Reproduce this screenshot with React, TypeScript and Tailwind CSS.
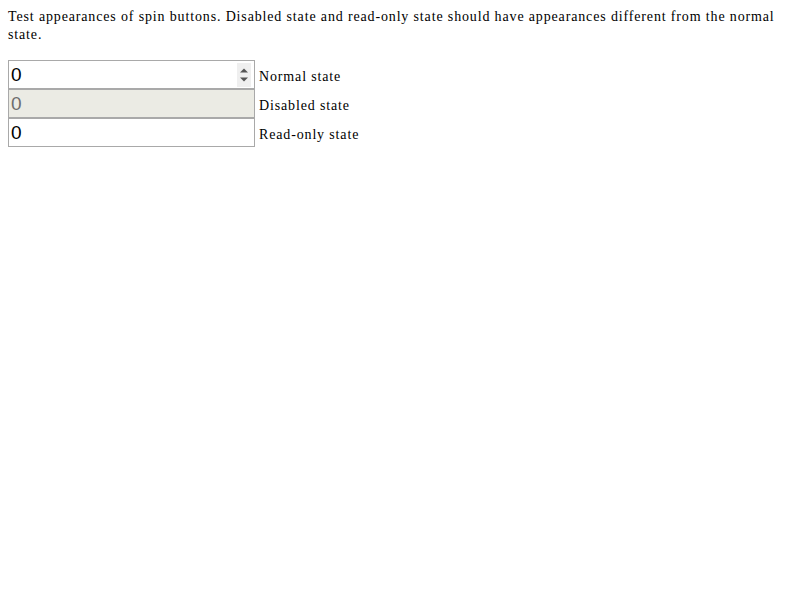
import { useState } from 'react'

const SpinIcon = () => (
  <svg width="14" height="24" viewBox="0 0 14 24">
    <rect x="0" y="0" width="14" height="24" fill="#efefef" />
    <path d="M3 9.5L7 5.5 11 9.5Z" fill="#555" />
    <path d="M3 14.5L7 18.5 11 14.5Z" fill="#555" />
  </svg>
)

function Field({ state }: { state: 'normal' | 'disabled' | 'readonly' }) {
  const [value, setValue] = useState('0')
  const disabled = state === 'disabled'
  return (
    <div
      className={`flex items-center w-[247px] h-[29px] border border-[#a9a9a9] ${disabled ? 'bg-[#ebebe4]' : 'bg-white'}`}
    >
      <input
        type="text"
        value={value}
        disabled={disabled}
        readOnly={state === 'readonly'}
        onChange={e => setValue(e.target.value)}
        className={`flex-1 min-w-0 h-full pl-[2px] outline-none bg-transparent font-['Liberation_Sans',Arial,sans-serif] text-[19px] ${disabled ? 'text-[#6d6d6d]' : 'text-black'}`}
      />
      {state === 'normal' && (
        <div className="mr-[3px] flex items-center">
          <SpinIcon />
        </div>
      )}
    </div>
  )
}

export default function App() {
  const rows: { state: 'normal' | 'disabled' | 'readonly'; label: string }[] = [
    { state: 'normal', label: 'Normal state' },
    { state: 'disabled', label: 'Disabled state' },
    { state: 'readonly', label: 'Read-only state' },
  ]
  return (
    <div className="p-2 bg-white min-h-[600px] font-['Liberation_Serif','Times_New_Roman',serif] text-[14px] tracking-[0.85px] text-black">
      <p className="leading-[18px] mb-4">
        Test appearances of spin buttons. Disabled state and read-only state should have appearances different from the normal state.
      </p>
      <div className="flex flex-col">
        {rows.map(r => (
          <div key={r.state} className="flex items-center gap-1 h-[29px]">
            <Field state={r.state} />
            <span className="pt-[3px]">{r.label}</span>
          </div>
        ))}
      </div>
    </div>
  )
}
